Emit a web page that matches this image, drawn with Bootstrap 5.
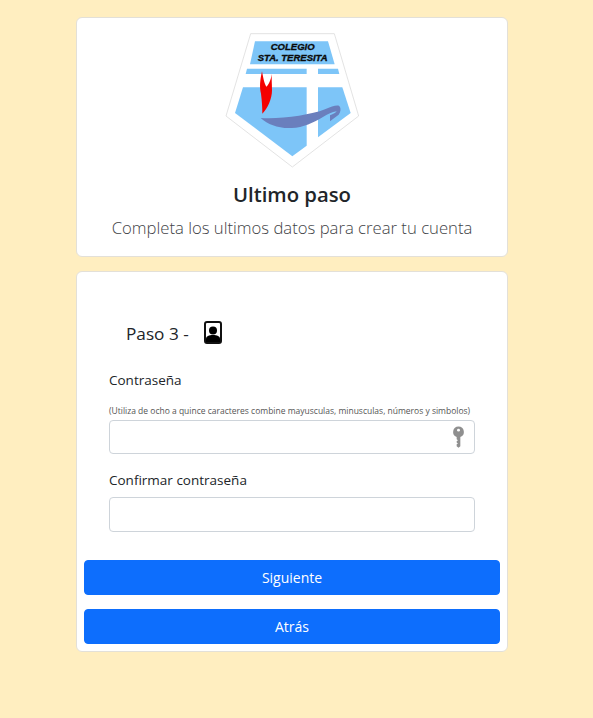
<!DOCTYPE html>
<html lang="es">
<head>
<meta charset="utf-8">
<title>Ultimo paso</title>
<link href="https://cdn.jsdelivr.net/npm/bootstrap@5.3.0/dist/css/bootstrap.min.css" rel="stylesheet">
<style>
body{background:#ffeec0;font-family:"Open Sans","Noto Sans",sans-serif;color:#212529;min-height:718px}
.page-col{width:432px;margin-left:76px;padding-top:17px}
.head-card{height:240px;margin-bottom:14px;border-color:#e3e0d8}
.logo-svg{display:block;width:135px;height:137px;margin:14px auto 0}
.logo-txt{font-family:"Liberation Sans",sans-serif;font-size:28.5px;font-weight:700;font-style:italic;fill:#0a0a0a;stroke:#0a0a0a;stroke-width:1}
.head-title{font-size:20.3px;font-weight:600;line-height:24px;margin:13px 0 0;text-align:center}
.head-sub{font-size:16.7px;font-weight:300;line-height:24px;margin:10px 0 0;text-align:center;color:#3f4347}
.form-card{height:381px;padding:0 7px;border-color:#e3e0d8}
.step-row{padding:50px 0 0 42px;height:76px;display:flex;align-items:flex-start;gap:15px}
.step-text{font-size:17.2px;line-height:24px}
.step-ico{width:18px;height:23px;margin-top:-1px}
.fields{padding:0 25px}
.lbl{font-size:13.5px;line-height:20px;display:block}
.lbl-a{margin-top:22px}
.hint{font-size:8.5px;line-height:12px;color:#555;margin-top:15px;white-space:nowrap}
.inp-a{height:34px;margin-top:3px;position:relative}
.inp-b{height:35px;margin-top:7px}
.lbl-b{margin-top:16px}
.form-control{border-color:#ced4da;border-radius:4px}
.key-ico{position:absolute;right:10px;top:6px;width:13px;height:22px}
.act-btn{height:35px;font-size:14px;line-height:20px;border-radius:4px;display:block;width:100%}
.act-one{margin-top:28px}
.act-two{margin-top:14px}
</style>
</head>
<body>
<div class="page-col">
  <div class="card head-card">
    <svg class="logo-svg" viewBox="75 50 405 411" aria-label="Escudo Colegio Sta. Teresita">
      <polygon points="152,55 403,55 476,302 277,455 78,302" fill="#fff" stroke="#d5d5d5" stroke-width="2"/>
      <polygon points="165,78 384,78 404,147 150,147" fill="#7dc5f8"/>
      <polygon points="141,160 320,160 320,176 137,176" fill="#7dc5f8"/>
      <polygon points="354,160 414,160 418,176 354,176" fill="#7dc5f8"/>
      <polygon points="129,216 320,216 320,391 277,423 105,293" fill="#7dc5f8"/>
      <polygon points="354,216 427,216 452,293 354,366" fill="#7dc5f8"/>
      <path d="M186,168C180,195 178,215 183,235C186,258 187,280 187,295C203,280 216,250 216,225C216,205 214,190 216,176C212,195 205,210 199,214C193,205 189,185 186,168Z" fill="#f40000"/>
      <path d="M182,308C240,312 330,300 375,282C395,274 410,268 418,272C424,280 422,290 416,298L390,318L390,300C400,296 408,292 410,288C395,290 385,296 370,304C340,322 310,336 275,338C235,340 205,328 182,308Z" fill="#6a7fbd"/>
      <text x="278" y="104" text-anchor="middle" class="logo-txt">COLEGIO</text>
      <text x="278" y="138" text-anchor="middle" class="logo-txt">STA. TERESITA</text>
    </svg>
    <h1 class="head-title">Ultimo paso</h1>
    <p class="head-sub">Completa los ultimos datos para crear tu cuenta</p>
  </div>
  <div class="card form-card">
    <div class="step-row">
      <span class="step-text">Paso 3 -</span>
      <svg class="step-ico" viewBox="0 0 18 23" aria-hidden="true">
        <rect x="1" y="1" width="16" height="21" rx="2" fill="#fff" stroke="#111" stroke-width="2"/>
        <circle cx="9" cy="9.500" r="4" fill="#000"/>
        <path d="M2 21v-3c0-3 3-4 7-4s7 1 7 4v3z" fill="#000"/>
      </svg>
    </div>
    <div class="fields">
      <label class="lbl lbl-a" for="p1">Contraseña</label>
      <div class="hint">(Utiliza de ocho a quince caracteres combine mayusculas, minusculas, números y simbolos)</div>
      <div class="inp-a">
        <input id="p1" type="password" class="form-control h-100">
        <svg class="key-ico" viewBox="0 0 14 24" aria-hidden="true">
          <path d="M7 .5a6 6 0 0 1 2 11.600V22l-2 1.600L5 22v-2l1.400-1L5 18v-1.500l1.400-1L5 14.500v-2.400A6 6 0 0 1 7 .5z" fill="#8f8f8f"/>
          <circle cx="7" cy="4.500" r="1.600" fill="#fff"/>
        </svg>
      </div>
      <label class="lbl lbl-b" for="p2">Confirmar contraseña</label>
      <div class="inp-b"><input id="p2" type="password" class="form-control h-100"></div>
    </div>
    <button type="button" class="btn btn-primary act-btn act-one p-0">Siguiente</button>
    <button type="button" class="btn btn-primary act-btn act-two p-0">Atrás</button>
  </div>
</div>
<script src="https://cdn.jsdelivr.net/npm/bootstrap@5.3.0/dist/js/bootstrap.bundle.min.js"></script>
</body>
</html>
